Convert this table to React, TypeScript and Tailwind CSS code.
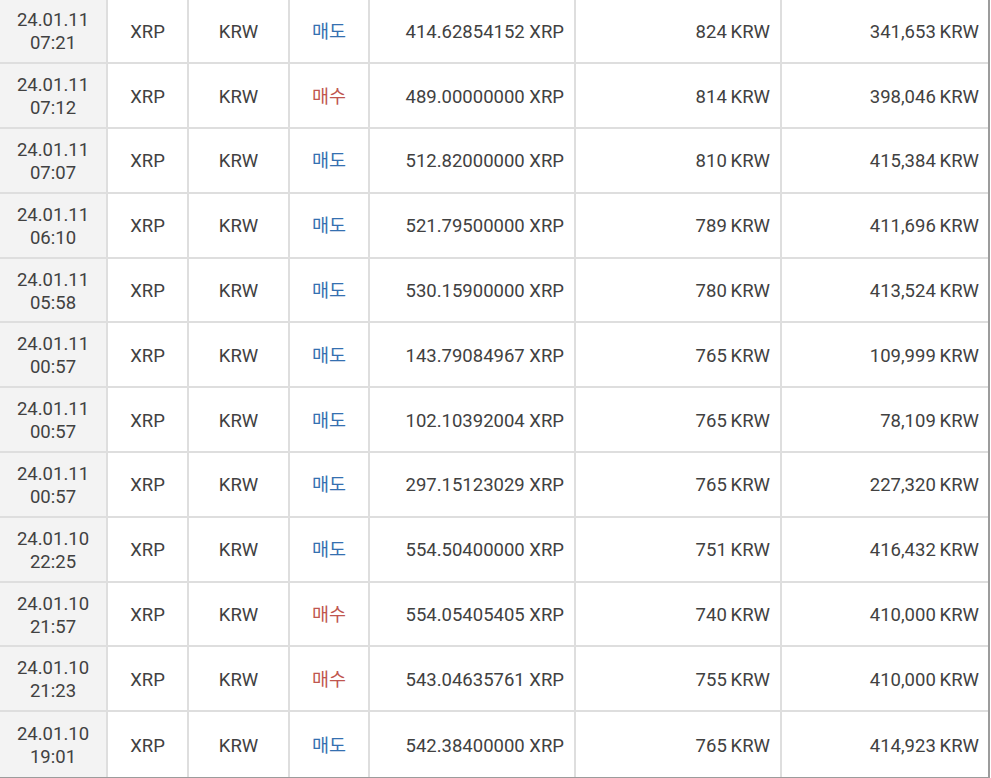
import React from 'react'

type Trade = {
  date: string
  time: string
  side: '매도' | '매수'
  amount: string
  price: string
  total: string
}

const trades: Trade[] = [
  { date: '24.01.11', time: '07:21', side: '매도', amount: '414.62854152', price: '824', total: '341,653' },
  { date: '24.01.11', time: '07:12', side: '매수', amount: '489.00000000', price: '814', total: '398,046' },
  { date: '24.01.11', time: '07:07', side: '매도', amount: '512.82000000', price: '810', total: '415,384' },
  { date: '24.01.11', time: '06:10', side: '매도', amount: '521.79500000', price: '789', total: '411,696' },
  { date: '24.01.11', time: '05:58', side: '매도', amount: '530.15900000', price: '780', total: '413,524' },
  { date: '24.01.11', time: '00:57', side: '매도', amount: '143.79084967', price: '765', total: '109,999' },
  { date: '24.01.11', time: '00:57', side: '매도', amount: '102.10392004', price: '765', total: '78,109' },
  { date: '24.01.11', time: '00:57', side: '매도', amount: '297.15123029', price: '765', total: '227,320' },
  { date: '24.01.10', time: '22:25', side: '매도', amount: '554.50400000', price: '751', total: '416,432' },
  { date: '24.01.10', time: '21:57', side: '매수', amount: '554.05405405', price: '740', total: '410,000' },
  { date: '24.01.10', time: '21:23', side: '매수', amount: '543.04635761', price: '755', total: '410,000' },
  { date: '24.01.10', time: '19:01', side: '매도', amount: '542.38400000', price: '765', total: '414,923' },
]

const App: React.FC = () => {
  return (
    <div className="w-[991px] h-[778px] overflow-hidden bg-white">
      <div
        className="w-[990px] -mt-[0.5px] border-r-2 border-b-2 border-[#9c9c9c] text-[#414141] text-[18.5px] leading-[23px]"
        style={{ fontFamily: 'Roboto, "Noto Sans CJK KR", sans-serif' }}
      >
        {trades.map((t, i) => {
          const last = i === trades.length - 1
          const rowBorder = last ? '' : 'border-b-2 border-b-[#dedede]'
          return (
            <div
              key={i}
              className={`grid grid-cols-[108px_81px_101px_80px_206px_206px_206px] h-[64.8px] ${rowBorder}`}
            >
              {/* date */}
              <div className="flex flex-col items-center justify-center pt-[3px] bg-[#f3f3f3] border-r-2 border-[#dedede]">
                <span>{t.date}</span>
                <span>{t.time}</span>
              </div>
              <div className="flex items-center justify-center pt-[3px] border-r-2 border-[#dedede]">XRP</div>
              <div className="flex items-center justify-center pt-[3px] border-r-2 border-[#dedede]">KRW</div>
              {/* side */}
              <div className="flex items-center justify-center pt-[3px] border-r-2 border-[#dedede]">
                <span className={t.side === '매도' ? 'text-[#3570b0]' : 'text-[#c0564f]'}>{t.side}</span>
              </div>
              <div className="flex items-center justify-end pt-[3px] pr-[10px] border-r-2 border-[#dedede]">
                {t.amount} XRP
              </div>
              <div className="flex items-center justify-end pt-[3px] pr-[10px] border-r-2 border-[#dedede]">
                {t.price}&#8201;KRW
              </div>
              <div className="flex items-center justify-end pt-[3px] pr-[9px]">
                {t.total}&#8201;KRW
              </div>
            </div>
          )
        })}
      </div>
    </div>
  )
}

export default App
